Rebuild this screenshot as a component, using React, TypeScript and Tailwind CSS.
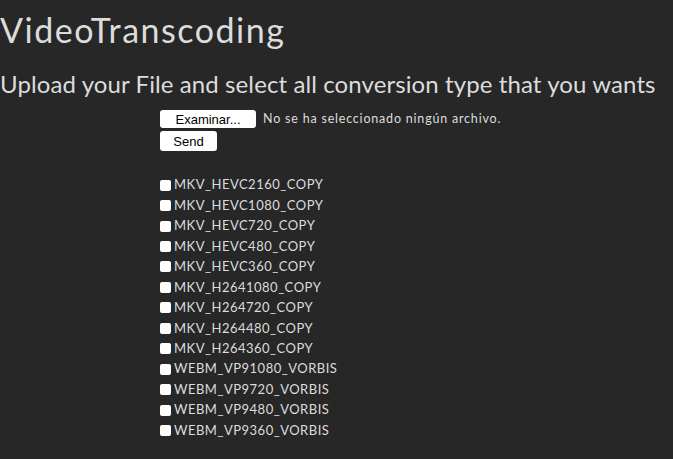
const types = [
  "MKV_HEVC2160_COPY",
  "MKV_HEVC1080_COPY",
  "MKV_HEVC720_COPY",
  "MKV_HEVC480_COPY",
  "MKV_HEVC360_COPY",
  "MKV_H2641080_COPY",
  "MKV_H264720_COPY",
  "MKV_H264480_COPY",
  "MKV_H264360_COPY",
  "WEBM_VP91080_VORBIS",
  "WEBM_VP9720_VORBIS",
  "WEBM_VP9480_VORBIS",
  "WEBM_VP9360_VORBIS",
];

export default function App() {
  return (
    <div className="min-h-[459px] w-full bg-[#272727] text-[#dcdcdc] font-['Lato',sans-serif]">
      <h1 className="h-[58px] pt-[10px] text-[34px] leading-[40px] tracking-[1.5px]">VideoTranscoding</h1>
      <h2 className="h-[46px] pt-[12px] text-[24px] leading-[28px] tracking-[0.1px]">
        Upload your File and select all conversion type that you wants
      </h2>
      <form className="pl-[160px] pt-[6px]">
        <div className="flex items-center gap-[7px] h-[18px]">
          <button
            type="button"
            className="h-[18px] w-[96px] rounded-[3px] bg-white text-black text-[13px] leading-none font-['Liberation_Sans',sans-serif]"
          >
            Examinar...
          </button>
          <span className="text-[12.5px] tracking-[0.8px]">No se ha seleccionado ningún archivo.</span>
        </div>
        <button
          type="button"
          className="mt-[3px] block h-[20px] w-[57px] rounded-[3px] bg-white text-black text-[13px] leading-none font-['Liberation_Sans',sans-serif]"
        >
          Send
        </button>
        <div className="pt-[24px]">
          {types.map((t) => (
            <label key={t} className="flex items-center h-[20.45px] text-[13px] tracking-[0.5px]">
              <span className="w-[11px] h-[11px] rounded-[2px] bg-white mr-[3px]" />
              {t}
            </label>
          ))}
        </div>
      </form>
    </div>
  );
}
